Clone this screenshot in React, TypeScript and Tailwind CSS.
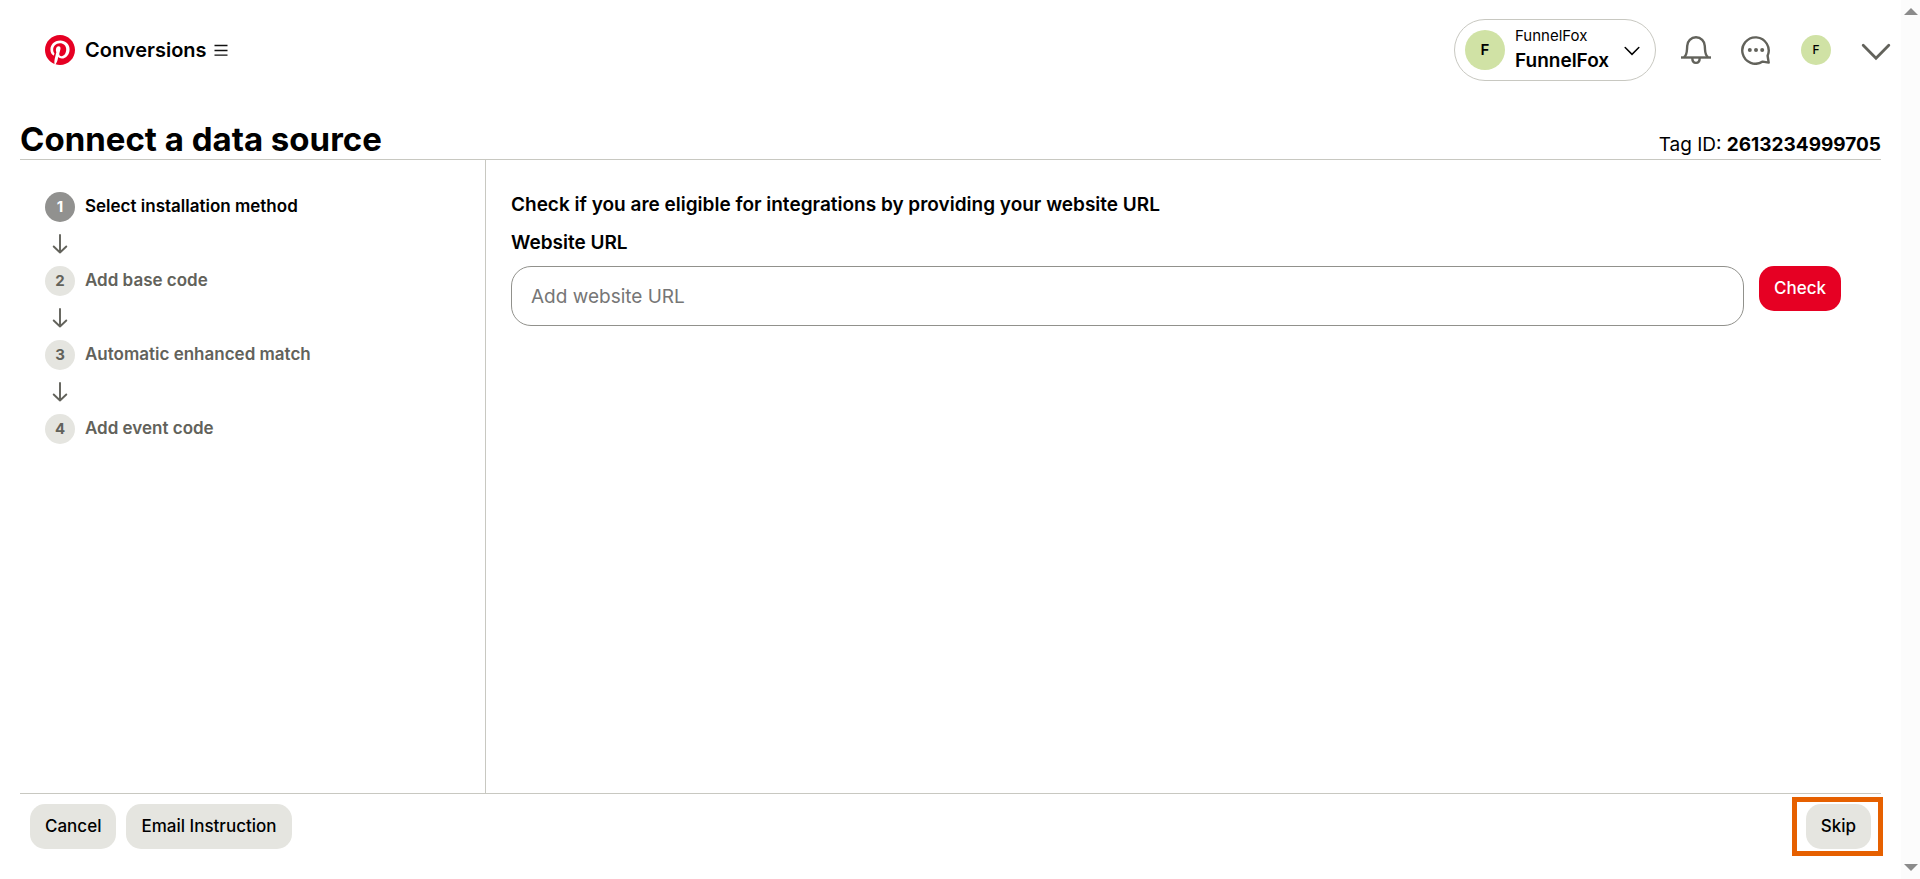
import React, { useState } from 'react';
import { clsx } from 'clsx';

const steps = [
  'Select installation method',
  'Add base code',
  'Automatic enhanced match',
  'Add event code',
];

const IconPinterest: React.FC = () => (
  <svg viewBox="0 0 24 24" className="w-[30px] h-[30px]" aria-hidden="true">
    <circle cx="12" cy="12" r="11.5" fill="#fff" />
    <path
      fill="#e60023"
      d="M12 0C5.373 0 0 5.372 0 12c0 5.084 3.163 9.426 7.627 11.174-.105-.949-.2-2.405.042-3.441.218-.937 1.407-5.965 1.407-5.965s-.359-.719-.359-1.782c0-1.668.967-2.914 2.171-2.914 1.023 0 1.518.769 1.518 1.69 0 1.029-.655 2.568-.994 3.995-.283 1.194.599 2.169 1.777 2.169 2.133 0 3.772-2.249 3.772-5.495 0-2.873-2.064-4.882-5.012-4.882-3.414 0-5.418 2.561-5.418 5.207 0 1.031.397 2.138.893 2.738a.36.36 0 0 1 .083.345l-.333 1.36c-.053.22-.174.267-.402.161-1.499-.698-2.436-2.889-2.436-4.649 0-3.785 2.75-7.262 7.929-7.262 4.163 0 7.398 2.967 7.398 6.931 0 4.136-2.607 7.464-6.227 7.464-1.216 0-2.359-.631-2.75-1.378l-.748 2.853c-.271 1.043-1.002 2.35-1.492 3.146C9.57 23.812 10.763 24 12 24c6.627 0 12-5.373 12-12 0-6.628-5.373-12-12-12z"
    />
  </svg>
);

const IconMenu: React.FC = () => (
  <svg viewBox="0 0 14 12" className="w-[14px] h-3" stroke="#111" strokeWidth="1.3" aria-hidden="true">
    <path d="M0.5 1.5h13M0.5 6.500h13M0.5 11.200h13" />
  </svg>
);

const IconBell: React.FC = () => (
  <svg viewBox="0 0 30 30" className="w-[30px] h-[30px]" fill="none" stroke="#62625b" strokeWidth="2.4" aria-hidden="true">
    <path d="M0 22.5h30" />
    <path d="M3 22.300c2-1.500 2.800-4 3-8l.2-3.300a8.800 8.800 0 0 1 17.600 0l.2 3.300c.2 4 1 6.500 3 8" />
    <path d="M11.300 23c0 6.500 7.400 6.500 7.400 0" />
  </svg>
);

const IconChat: React.FC = () => (
  <svg viewBox="0 0 30 30" className="w-[30px] h-[30px]" fill="none" stroke="#62625b" strokeWidth="2.4" strokeLinejoin="round" aria-hidden="true">
    <path d="M21.700 26.600A13.200 13.200 0 1 1 26.600 20.800L27.700 27.600z" />
    <g fill="#62625b" stroke="none">
      <circle cx="8.8" cy="15" r="2" />
      <circle cx="15" cy="15" r="2" />
      <circle cx="21.2" cy="15" r="2" />
    </g>
  </svg>
);

const IconChevron: React.FC<{ className: string }> = ({ className }) => (
  <svg viewBox="0 0 30 30" className={className} fill="none" stroke="currentColor" strokeWidth="2.8" strokeLinecap="round" aria-hidden="true">
    <path d="M2.200 10.200l12.800 13 12.800-13" />
  </svg>
);

const IconArrowDown: React.FC = () => (
  <svg viewBox="0 0 16 20" className="w-4 h-5" fill="none" stroke="#62625b" strokeWidth="1.9" strokeLinecap="round" strokeLinejoin="round" aria-hidden="true">
    <path d="M8 1v17.500M1.700 12.500L8 18.500l6.300-6" />
  </svg>
);

const Button: React.FC<{ children: React.ReactNode; primary?: boolean }> = ({ children, primary }) => (
  <button
    type="button"
    className={clsx(
      'h-[45px] px-[15px] rounded-[15px] text-[17px] font-medium whitespace-nowrap',
      primary ? 'bg-[#e60023] text-white' : 'bg-[#e5e5e0] text-black'
    )}
  >
    {children}
  </button>
);

const Header: React.FC = () => (
  <header className="h-[100px] pl-[45px] pr-[10px] flex items-center justify-between">
    <div className="flex items-center">
      <a href="#home" aria-label="Home">
        <IconPinterest />
      </a>
      <span className="ml-[10px] text-[20px] font-semibold">Conversions</span>
      <button type="button" aria-label="Menu" className="ml-[7px]">
        <IconMenu />
      </button>
    </div>
    <div className="flex items-center gap-[30px]">
      <button type="button" className="h-[62px] w-[202px] -mr-[5px] pl-[10px] pr-[15px] flex items-center rounded-full border border-[#c8c8c1] text-left">
        <span className="w-10 h-10 rounded-full bg-[#d0e2a5] flex items-center justify-center text-[15px] font-semibold">F</span>
        <span className="ml-[10px] flex-1 flex flex-col">
          <span className="text-[15px] leading-[22px]">FunnelFox</span>
          <span className="text-[19px] leading-[28px] font-semibold">FunnelFox</span>
        </span>
        <IconChevron className="w-4 h-4 text-black" />
      </button>
      <button type="button" aria-label="Notifications">
        <IconBell />
      </button>
      <button type="button" aria-label="Messages">
        <IconChat />
      </button>
      <button type="button" aria-label="Profile" className="w-[30px] h-[30px] rounded-full bg-[#d0e2a5] text-[12px] font-medium">
        F
      </button>
      <button type="button" aria-label="More options">
        <IconChevron className="w-[30px] h-[30px] text-[#62625b]" />
      </button>
    </div>
  </header>
);

const StepList: React.FC<{ current: number }> = ({ current }) => (
  <ol className="w-[466px] shrink-0 border-r border-[#c8c8c1] pl-[25px] pt-8">
    {steps.map((step, i) => (
      <li key={step}>
        {i > 0 && (
          <div className="w-[30px] h-11 flex items-center justify-center">
            <IconArrowDown />
          </div>
        )}
        <div className="flex items-center gap-[10px]">
          <span
            className={clsx(
              'w-[30px] h-[30px] rounded-full flex items-center justify-center text-[15px] font-bold',
              i === current ? 'bg-[#91918f] text-white' : 'bg-[#e5e5e0] text-[#62625b]'
            )}
          >
            {i + 1}
          </span>
          <span className={clsx('text-[17px] font-semibold', i === current ? 'text-black' : 'text-[#62625b]')}>{step}</span>
        </div>
      </li>
    ))}
  </ol>
);

const App: React.FC = () => {
  const [url, setUrl] = useState('');

  return (
    <div className="min-h-screen flex bg-white text-black font-['Inter','Liberation_Sans',sans-serif]">
      <div className="flex-1 min-w-0 flex flex-col">
        <Header />

        <div className="mx-5 h-[60px] flex items-end justify-between border-b border-[#c8c8c1]">
          <h1 className="text-[33px] leading-10 font-bold">Connect a data source</h1>
          <p className="text-[19px] leading-7">
            Tag ID: <strong className="font-bold">2613234999705</strong>
          </p>
        </div>

        <main className="mx-5 flex-1 flex">
          <StepList current={0} />
          <section className="flex-1 pl-[25px] pr-10 pt-[30px]">
            <h2 className="text-[19px] leading-[30px] font-semibold">
              Check if you are eligible for integrations by providing your website URL
            </h2>
            <label htmlFor="website-url" className="block mt-2 text-[19px] leading-[30px] font-semibold">
              Website URL
            </label>
            <div className="mt-2 flex items-start gap-[15px]">
              <input
                id="website-url"
                type="text"
                value={url}
                onChange={(e) => setUrl(e.target.value)}
                placeholder="Add website URL"
                className="flex-1 min-w-0 h-[60px] px-[19px] rounded-[20px] border border-[#91918c] text-[19px] placeholder:text-[#767676]"
              />
              <Button primary>Check</Button>
            </div>
          </section>
        </main>

        <footer className="mx-5 px-[10px] pt-[10px] pb-[30px] flex justify-between border-t border-[#c8c8c1]">
          <div className="flex gap-[10px]">
            <Button>Cancel</Button>
            <Button>Email Instruction</Button>
          </div>
          <div className="relative">
            <Button>Skip</Button>
            <div className="absolute -top-[7px] -bottom-[7px] -left-[14px] -right-3 border-[5px] border-[#e66000] pointer-events-none" />
          </div>
        </footer>
      </div>

      {/* Scroll gutter */}
      <div className="w-[19px] shrink-0 bg-[#fcfcfc] flex flex-col items-center justify-between py-2" aria-hidden="true">
        <svg viewBox="0 0 14 7" className="w-[14px] h-[7px]" fill="#8b8b8b">
          <path d="M7 0l7 7H0z" />
        </svg>
        <svg viewBox="0 0 14 7" className="w-[14px] h-[7px]" fill="#8b8b8b">
          <path d="M0 0h14L7 7z" />
        </svg>
      </div>
    </div>
  );
};

export default App;
